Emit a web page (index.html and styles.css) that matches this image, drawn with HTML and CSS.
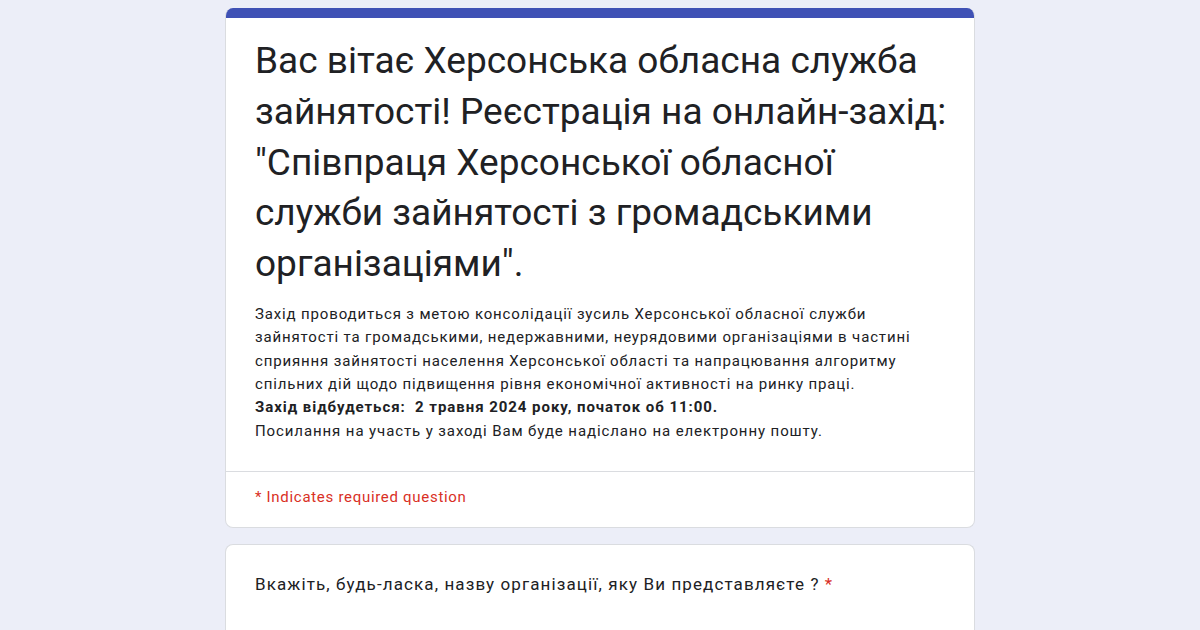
FILE: index.html
```html
<!DOCTYPE html>
<html lang="uk">
<head>
<meta charset="utf-8">
<title>Реєстрація</title>
<link rel="stylesheet" href="styles.css">
</head>
<body>
<div class="page">
  <div class="card header-card">
    <div class="top-bar"></div>
    <div class="header-body">
      <h1 class="title">Вас вітає Херсонська обласна служба зайнятості! Реєстрація на онлайн-захід: "Співпраця Херсонської обласної служби зайнятості з громадськими організаціями".</h1>
      <div class="desc">
        <p>Захід проводиться з метою консолідації зусиль Херсонської обласної служби зайнятості та громадськими, недержавними, неурядовими організаціями в частині сприяння зайнятості населення Херсонської області та напрацювання алгоритму спільних дій щодо підвищення рівня економічної активності на ринку праці.</p>
        <p class="bold">Захід відбудеться:&nbsp; 2 травня 2024 року, початок об 11:00.</p>
        <p class="last">Посилання на участь у заході Вам буде надіслано на електронну пошту.</p>
      </div>
    </div>
    <div class="required-note">* Indicates required question</div>
  </div>
  <div class="card question-card">
    <div class="question">Вкажіть, будь-ласка, назву організації, яку Ви представляєте ? <span class="star">*</span></div>
  </div>
</div>
</body>
</html>
```
FILE: styles.css
```css
html, body {
  margin: 0;
  padding: 0;
}
body {
  background: #eceef8;
  font-family: Roboto, "Noto Sans", Arial, sans-serif;
  color: #202124;
  height: 630px;
  overflow: hidden;
}
.page {
  width: 750px;
  height: 622px;
  margin: 0 auto;
  padding-top: 8px;
  display: flex;
  flex-direction: column;
  gap: 16px;
  overflow: hidden;
}
.card {
  background: #fff;
  border: 1px solid #dadce0;
  border-radius: 8px;
  overflow: hidden;
  flex-shrink: 0;
}
.header-card {
  border-top: none;
}
.top-bar {
  height: 10px;
  background: #3f51b5;
  margin: 0 -1px;
}
.header-body {
  padding: 18px 16px 28px 29px;
  border-bottom: 1px solid #dadce0;
}
.title {
  margin: 0;
  font-family: Roboto, "Noto Sans", sans-serif;
  font-weight: 400;
  font-size: 37px;
  line-height: 50.75px;
  color: #202124;
  letter-spacing: 0;
}
.desc {
  margin-top: 13px;
  padding-right: 13px;
  font-size: 15px;
  line-height: 23.4px;
  letter-spacing: 0.85px;
  color: #202124;
}
.desc p {
  margin: 0;
}
.desc .bold {
  font-weight: 700;
  letter-spacing: 0.95px;
}
.desc .last {
  letter-spacing: 0.9px;
}
.required-note {
  padding: 16px 29px 21px;
  font-size: 15px;
  letter-spacing: 0.7px;
  color: #d93025;
}
.question-card {
  flex: 1 0 auto;
  border-bottom: none;
  border-radius: 8px 8px 0 0;
}
.question {
  padding: 27px 29px;
  font-size: 17px;
  line-height: 24px;
  letter-spacing: 1.1px;
  color: #202124;
}
.star {
  color: #d93025;
}
```
